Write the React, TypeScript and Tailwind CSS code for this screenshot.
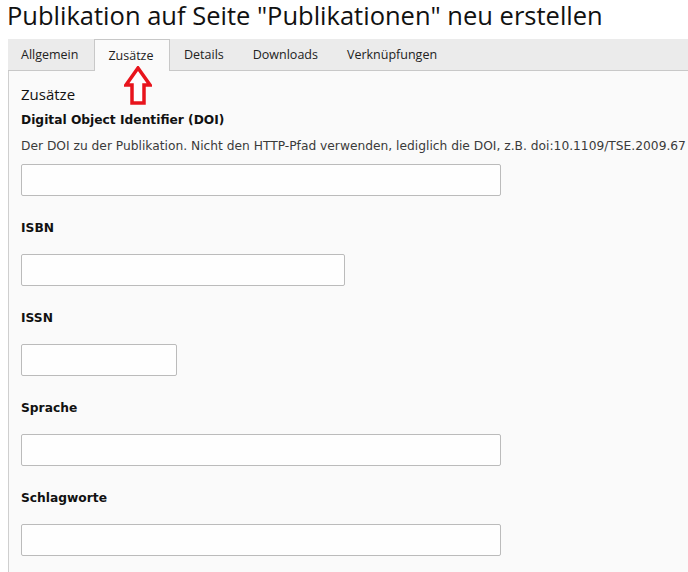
import React from 'react'

const TABS = ['Allgemein', 'Zusätze', 'Details', 'Downloads', 'Verknüpfungen']

interface Field {
  label: string
  width: string
  help?: string
}

const FIELDS: Field[] = [
  {
    label: 'Digital Object Identifier (DOI)',
    width: 'w-[480px]',
    help: 'Der DOI zu der Publikation. Nicht den HTTP-Pfad verwenden, lediglich die DOI, z.B. doi:10.1109/TSE.2009.67',
  },
  { label: 'ISBN', width: 'w-[324px]' },
  { label: 'ISSN', width: 'w-[156px]' },
  { label: 'Sprache', width: 'w-[480px]' },
  { label: 'Schlagworte', width: 'w-[480px]' },
]

function RedArrow() {
  return (
    <svg
      className="absolute left-[124px] top-[66px]"
      width="28"
      height="40"
      viewBox="0 0 28 40"
    >
      <polygon
        points="14,2 26,19 20,19 20,37 8,37 8,19 2,19"
        fill="#fff"
        stroke="#e8141c"
        strokeWidth="3.5"
        strokeLinejoin="miter"
      />
    </svg>
  )
}

export default function App() {
  return (
    <div className="relative w-[688px] h-[572px] overflow-hidden bg-white">
      {/* Title */}
      <h1 className="pl-[7px] pt-[4px] h-[39px] text-[25.5px] leading-[22px] text-[#111] font-['Open_Sans',sans-serif] whitespace-nowrap">
        Publikation auf Seite "Publikationen" neu erstellen
      </h1>

      <div className="ml-[8px]">
        {/* Tab bar */}
        <div className="flex h-[32px] bg-[#ebebeb] border-b border-[#c8c8c8] font-['Open_Sans',sans-serif] text-[12.5px] text-[#222]">
          {TABS.map((tab, i) => {
            const active = tab === 'Zusätze'
            return (
              <div
                key={tab}
                className={
                  active
                    ? 'h-[32px] pl-[13px] pr-[15px] pt-[1px] flex items-center bg-[#fafafa] border border-b-0 border-[#c8c8c8] -mb-[1px]'
                    : i === 0
                      ? 'h-[31px] pl-[13px] pr-[16px] pt-[1px] flex items-center'
                      : 'h-[31px] px-[14.5px] pt-[1px] flex items-center'
                }
              >
                {tab}
              </div>
            )
          })}
        </div>

        {/* Panel */}
        <div className="bg-[#fafafa] border-l border-[#cfcfcf] pl-[12px] pt-[13px] h-[502px]">
          <div className="text-[15px] leading-[20px] text-[#111] font-['Open_Sans',sans-serif] mb-[7px]">
            Zusätze
          </div>

          {FIELDS.map((f) => (
            <div key={f.label} className="mb-[23px] font-['DejaVu_Sans','Verdana',sans-serif]">
              <div
                className={`text-[12.25px] leading-[18px] font-bold text-[#111] ${f.help ? 'mb-[8px]' : 'mb-[17px]'}`}
              >
                {f.label}
              </div>
              {f.help && (
                <div className="text-[12.25px] leading-[18px] text-[#3a3a3a] mb-[9px] whitespace-nowrap">
                  {f.help}
                </div>
              )}
              <div className={`${f.width} h-[32px] bg-[#fefefe] border border-[#bbbbbb] rounded-[2px]`} />
            </div>
          ))}
        </div>
      </div>

      <RedArrow />
    </div>
  )
}
